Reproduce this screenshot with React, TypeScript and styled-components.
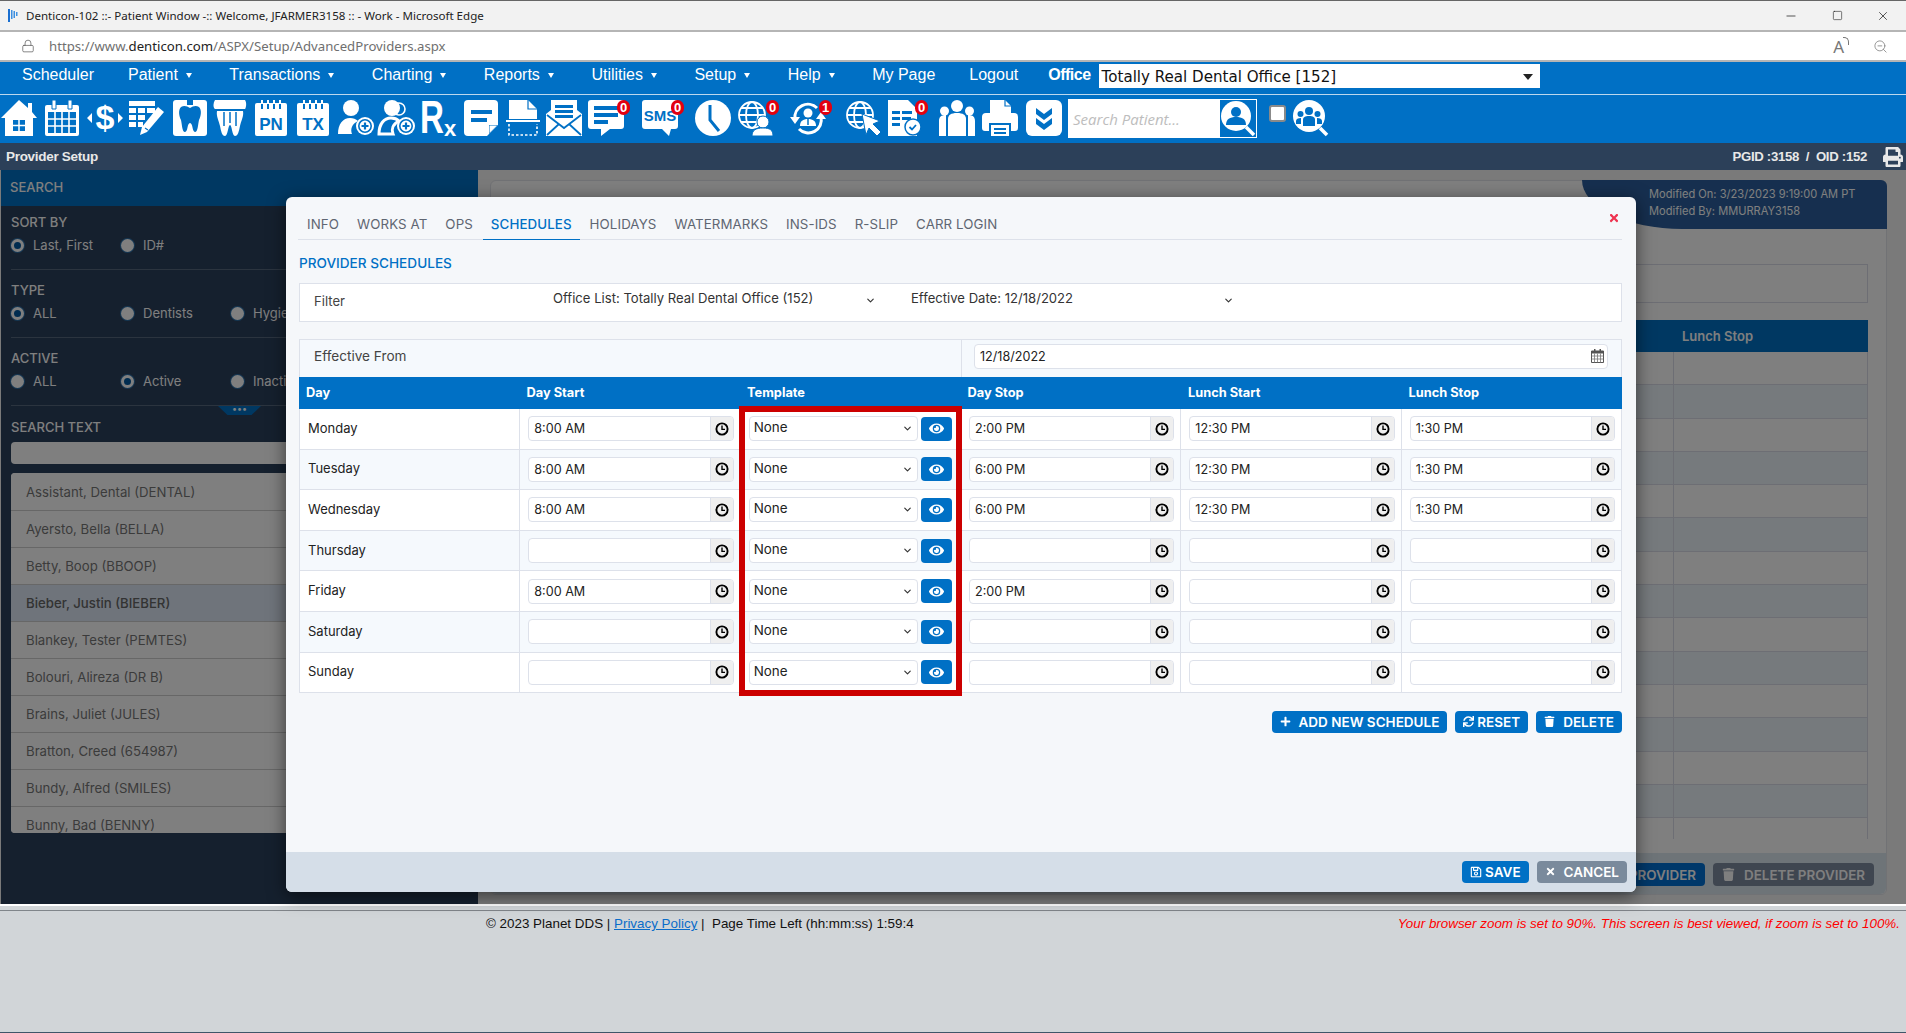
import React from 'react';
import styled, { createGlobalStyle } from 'styled-components';
import { ChevronDown, Lock, ZoomOut, Minus, Square, X } from 'lucide-react';
import { FaEye, FaPlus, FaPrint, FaRegSave, FaSync, FaTimes, FaTrash } from 'react-icons/fa';

const BLUE = '#0070c5';
const LINE = '#dde1ea';
const UI_FONT = '"Inter", "Open Sans", sans-serif';
const ARIAL = '"Liberation Sans", Arial, sans-serif';

const GlobalStyle = createGlobalStyle`
    html, body { margin: 0; padding: 0; background: #d1d5d8; }
    * { box-sizing: border-box; }
`;

const Page = styled.div`
    width: 1906px;
    height: 1033px;
    display: flex;
    flex-direction: column;
    overflow: hidden;
    font-family: ${UI_FONT};
`;

const TitleBar = styled.div`
    height: 32px;
    flex: none;
    display: flex;
    align-items: center;
    background: #f2f2f2;
    border-top: 1px solid #666;
    border-bottom: 2px solid #b5b5b5;
    padding-left: 8px;
    font: 11.55px "Noto Sans", sans-serif;
    color: #222;
`;

const TitleText = styled.span`
    margin-left: 8px;
    flex: 1;
`;

const WindowButton = styled.span`
    width: 46px;
    display: flex;
    justify-content: center;
    color: #111;
`;

const AddressBar = styled.div`
    height: 30px;
    flex: none;
    display: flex;
    align-items: center;
    background: #fff;
    border-bottom: 2px solid #b5b5b5;
    padding: 0 18px 0 21px;
    font: 13.2px "Noto Sans", sans-serif;
    color: #6f6f6f;
`;

const Url = styled.span`
    margin-left: 14px;
    flex: 1;
    b { font-weight: 400; color: #222; }
`;

const AddressTool = styled.span`
    margin-left: 29px;
    display: flex;
    color: #777;
`;

const ReadAloud = styled.span`
    font: 17px "Noto Sans", sans-serif;
    color: #777;
    position: relative;
    &::after {
        content: '';
        position: absolute;
        top: 2px;
        right: -5px;
        width: 5px;
        height: 7px;
        border-top: 1px solid #777;
        border-right: 1px solid #777;
        border-radius: 0 5px 0 0;
    }
`;

const MenuBar = styled.nav`
    height: 33px;
    flex: none;
    display: flex;
    align-items: flex-start;
    gap: 34px;
    background: ${BLUE};
    padding: 0 0 0 22px;
    border-bottom: 1px solid #bcd8ee;
`;

const MenuItem = styled.span`
    height: 25px;
    display: flex;
    align-items: center;
    color: #fff;
    font: 16px ${ARIAL};
`;

const Caret = styled.i`
    margin: 1px 3.5px 0 8px;
    border-left: 3.5px solid transparent;
    border-right: 3.5px solid transparent;
    border-top: 5px solid #fff;
`;

const OfficeLabel = styled.b`
    margin-left: -4px;
    height: 25px;
    display: flex;
    align-items: center;
    color: #fff;
    letter-spacing: -0.5px;
    font: bold 16px ${ARIAL};
`;

const OfficeSelect = styled.div`
    width: 441px;
    height: 24px;
    margin: 2px 0 0 -26px;
    padding: 1px 6px 0 3px;
    background: #fff;
    display: flex;
    align-items: center;
    justify-content: space-between;
    font: 15.1px "DejaVu Sans", sans-serif;
    color: #111;
`;

const SelectCaret = styled.i`
    border-left: 5.5px solid transparent;
    border-right: 5.5px solid transparent;
    border-top: 6px solid #222;
    margin-right: 1px;
`;

const IconBar = styled.div`
    height: 48px;
    flex: none;
    display: flex;
    align-items: flex-start;
    background: ${BLUE};
    padding: 5px 0 0 1px;
`;

const IconSlot = styled.span<{ $w: number }>`
    position: relative;
    flex: none;
    width: ${p => p.$w}px;
    height: 36px;
    svg { display: block; width: 36px; height: 36px; overflow: visible; }
`;

const Badge = styled.b`
    position: absolute;
    top: 0;
    left: 29px;
    width: 13px;
    height: 15px;
    border-radius: 7px;
    background: #e3000f;
    color: #fff;
    font: bold 13px/15px ${ARIAL};
    text-align: center;
`;

const SearchBox = styled.div`
    flex: none;
    width: 189px;
    height: 39px;
    margin-top: -1px;
    background: #fff;
    display: flex;
    align-items: center;
    justify-content: space-between;
    padding: 1px 1px 1px 5px;
    font: italic 15px "Open Sans", sans-serif;
    color: #bdbdbd;
`;

const SearchIcon = styled.span`
    width: 36px;
    height: 37px;
    background: ${BLUE};
    svg { display: block; }
`;

const SmallCheck = styled.span`
    flex: none;
    width: 17px;
    height: 17px;
    margin: 5px 7px 0 12px;
    background: #fff;
    border: 2px solid #8a8a8a;
    border-radius: 3px;
`;

const PageHead = styled.header`
    height: 27px;
    flex: none;
    display: flex;
    align-items: center;
    justify-content: space-between;
    background: #2c4059;
    padding: 0 3px 0 6px;
    color: #e8e8e8;
    font: bold 13.5px ${ARIAL};
    letter-spacing: -0.3px;
`;

const HeadRight = styled.span`
    display: flex;
    align-items: center;
    gap: 16px;
    font-size: 13.2px;
    svg { display: block; }
`;

const Main = styled.main`
    position: relative;
    height: 734px;
    flex: none;
    display: flex;
    background: #f4f4f4;
    padding-left: 1px;
`;

const Sidebar = styled.aside`
    position: relative;
    width: 477px;
    flex: none;
    background: #2a405c;
    color: #fff;
    font-size: 13px;
`;

const SideHead = styled.div`
    height: 36px;
    display: flex;
    align-items: center;
    padding: 0 0 2px 9px;
    background: ${BLUE};
    font-weight: 500;
    font-size: 13px;
`;

const SideBody = styled.div`
    padding: 0 10px;
`;

const SideSection = styled.section`
    padding: 8px 0 16px;
    border-bottom: 1px solid #56687f;
    & + & { padding-top: 12px; }
`;

const SideLabel = styled.div`
    height: 16px;
    line-height: 16px;
    font-weight: 500;
`;

const RadioRow = styled.div`
    display: flex;
    margin-top: 7px;
`;

const RadioOption = styled.label`
    width: 110px;
    height: 16px;
    display: flex;
    align-items: center;
    gap: 9px;
`;

const Radio = styled.i<{ $on?: boolean }>`
    width: 13px;
    height: 13px;
    flex: none;
    border-radius: 50%;
    background: ${p => (p.$on ? '#0058a0' : '#fff')};
    border: ${p => (p.$on ? '3px solid #fff' : 'none')};
    box-shadow: 0 0 0 1px #2b6fa8;
`;

const Grip = styled.div`
    position: absolute;
    left: 217px;
    top: 236px;
    width: 43px;
    height: 9px;
    background: #0070c5;
    clip-path: polygon(0 0, 100% 0, 78% 100%, 22% 100%);
    color: #fff;
    font-size: 9px;
    line-height: 5px;
    text-align: center;
`;

const SearchLabel = styled(SideLabel)`
    margin-top: 13px;
`;

const SideInput = styled.div`
    height: 22px;
    margin-top: 7px;
    background: #fff;
    border-radius: 4px;
`;

const ProviderList = styled.ul`
    list-style: none;
    margin: 9px 0 0;
    padding: 0;
    height: 360px;
    overflow: hidden;
    background: #fff;
    border-radius: 4px;
    color: #777;
`;

const ProviderItem = styled.li<{ $on?: boolean }>`
    height: 37px;
    display: flex;
    align-items: center;
    padding-left: 15px;
    border-bottom: 1px solid #cfcfcf;
    background: ${p => (p.$on ? '#dee9f6' : '#fff')};
    color: ${p => (p.$on ? '#666' : '#777')};
    font-weight: ${p => (p.$on ? 500 : 400)};
    font-size: 13.2px;
    white-space: nowrap;
    &:first-child { height: 38px; }
`;

const Panel = styled.section`
    position: relative;
    width: 1397px;
    height: 715px;
    margin: 10px 0 0 12px;
    display: flex;
    flex-direction: column;
    background: #fff;
    border-radius: 6px;
    border: 1px solid #e2e4ea;
    color: #fff;
`;

const ModifiedTag = styled.div`
    position: absolute;
    top: -1px;
    right: -1px;
    width: 305px;
    height: 49px;
    padding: 6px 0 0 67px;
    background: #2c5f9e;
    border-radius: 0 6px 0 100px / 0 6px 0 49px;
    font-size: 11.1px;
    line-height: 17px;
    color: #fff;
`;

const PanelBody = styled.div`
    flex: 1;
    overflow: hidden;
    padding: 83px 18px 0 0;
`;

const PanelBox = styled.div`
    height: 39px;
    border: 1px solid #dadde8;
`;

const PanelTable = styled.div`
    margin-top: 17px;
    height: 519px;
    overflow: hidden;
`;

const PanelHeadRow = styled.div`
    height: 32px;
    display: flex;
    justify-content: flex-end;
    align-items: center;
    background: ${BLUE};
    font-weight: 600;
    font-size: 13px;
`;

const PanelHeadCell = styled.span`
    width: 194px;
    padding-left: 8px;
`;

const PanelRow = styled.div<{ $alt: boolean }>`
    height: 33.3px;
    display: flex;
    justify-content: flex-end;
    background: ${p => (p.$alt ? '#edf5fb' : '#fff')};
    border-bottom: 1px solid #dadde8;
    border-right: 1px solid #dadde8;
`;

const PanelCell = styled.span`
    width: 194px;
    border-left: 1px solid #dadde8;
`;

const PanelFoot = styled.div`
    height: 41px;
    flex: none;
    display: flex;
    justify-content: flex-end;
    align-items: flex-start;
    gap: 8px;
    padding: 10px 12px 0 0;
    background: #dce8f0;
    border-radius: 0 0 6px 6px;
`;

const PanelButton = styled.span<{ $muted?: boolean }>`
    height: 23px;
    display: flex;
    align-items: center;
    gap: 9px;
    padding: 0 9px;
    border-radius: 4px;
    background: ${p => (p.$muted ? '#7f8ca0' : '#0070d4')};
    color: #fff;
    font-size: 13.4px;
    font-weight: 600;
`;

const Overlay = styled.div`
    position: absolute;
    inset: 0;
    background: rgba(0, 0, 0, 0.5);
`;

const Modal = styled.div`
    position: absolute;
    left: 286px;
    top: 27px;
    width: 1350px;
    height: 695px;
    display: flex;
    flex-direction: column;
    background: #f5f7fa;
    border-radius: 6px;
    box-shadow: 0 4px 18px rgba(0, 0, 0, 0.55);
    overflow: hidden;
`;

const ModalBody = styled.div`
    position: relative;
    flex: 1;
    padding: 0 14px 0 13px;
`;

const Tabs = styled.div`
    height: 43px;
    display: flex;
    align-items: flex-end;
    gap: 2px;
    margin-left: -1px;
    padding-left: 1px;
    border-bottom: 1px solid ${LINE};
`;

const Tab = styled.span<{ $on?: boolean }>`
    height: 30px;
    display: flex;
    align-items: center;
    padding: 0 8px 1px;
    margin-bottom: -1px;
    border-bottom: 1px solid ${p => (p.$on ? BLUE : 'transparent')};
    color: ${p => (p.$on ? BLUE : '#5f6672')};
    font-size: 13.3px;
    letter-spacing: 0.1px;
    font-weight: ${p => (p.$on ? 500 : 400)};
    white-space: nowrap;
`;

const CloseButton = styled.span`
    position: absolute;
    top: 15px;
    right: 16px;
    color: #ee3350;
    display: flex;
`;

const SectionTitle = styled.h2`
    margin: 15px 0 12px;
    height: 16px;
    font-size: 13.6px;
    line-height: 16px;
    font-weight: 500;
    color: ${BLUE};
`;

const FilterRow = styled.div`
    height: 39px;
    display: grid;
    grid-template-columns: 253px 358px 1fr;
    align-items: center;
    background: #fff;
    border: 1px solid ${LINE};
    font-size: 13.1px;
    color: #333;
`;

const FilterLabel = styled.span`
    padding: 0 0 3px 14px;
    color: #444;
`;

const FilterSelect = styled.span`
    width: 323px;
    display: flex;
    align-items: center;
    justify-content: space-between;
    margin-top: -9px;
    svg { margin-top: 4px; }
`;

const EffectiveRow = styled.div`
    height: 38px;
    margin-top: 17px;
    display: grid;
    grid-template-columns: 662px 1fr;
    background: #f5f9fd;
    border: 1px solid ${LINE};
    border-bottom: none;
    font-size: 13.6px;
    color: #444;
`;

const EffectiveLabel = styled.span`
    display: flex;
    align-items: center;
    padding: 0 0 5px 14px;
    border-right: 1px solid ${LINE};
`;

const DateCell = styled.span`
    display: flex;
    align-items: flex-start;
    padding: 4px 13px 0 12px;
`;

const DateInput = styled.span`
    flex: 1;
    height: 25px;
    display: flex;
    align-items: center;
    justify-content: space-between;
    padding: 0 3px 1px 5px;
    background: #fff;
    border: 1px solid ${LINE};
    border-radius: 4px;
    color: #222;
    font-size: 12.6px;
`;

const ScheduleGrid = styled.div`
    position: relative;
`;

const ScheduleHead = styled.div`
    height: 32px;
    display: grid;
    grid-template-columns: repeat(6, 1fr);
    align-items: center;
    background: ${BLUE};
    color: #fff;
    font-size: 12.8px;
    font-weight: 700;
    padding-bottom: 2px;
`;

const HeadCell = styled.span`
    padding-left: 7px;
`;

const ScheduleRow = styled.div<{ $alt: boolean }>`
    height: 40.6px;
    display: grid;
    grid-template-columns: repeat(6, 1fr);
    background: ${p => (p.$alt ? '#f5f9fd' : '#fff')};
    border-left: 1px solid ${LINE};
    border-bottom: 1px solid ${LINE};
`;

const Cell = styled.div`
    display: flex;
    align-items: center;
    gap: 3px;
    padding: 0 6px 0 8px;
    border-right: 1px solid ${LINE};
    min-width: 0;
`;

const DayCell = styled(Cell)`
    color: #222;
    font-size: 13px;
    padding-bottom: 2px;
`;

const TemplateCell = styled(Cell)`
    padding-right: 8px;
`;

const TimeField = styled.div`
    flex: 1;
    height: 25px;
    display: flex;
    background: #fff;
    border: 1px solid ${LINE};
    border-radius: 4px;
    overflow: hidden;
`;

const TimeValue = styled.span`
    flex: 1;
    display: flex;
    align-items: center;
    padding-left: 5px;
    color: #222;
    font-size: 12.6px;
`;

const TimeAddon = styled.span`
    width: 23px;
    flex: none;
    display: flex;
    align-items: center;
    justify-content: center;
    background: #efefef;
    border-left: 1px solid ${LINE};
    svg { display: block; }
`;

const TemplateSelect = styled.div`
    flex: 1;
    height: 25px;
    display: flex;
    align-items: center;
    justify-content: space-between;
    padding: 0 4px 0 4px;
    background: #fff;
    border: 1px solid ${LINE};
    border-radius: 4px;
    color: #222;
    font-size: 13.4px;
    span { margin-top: -3px; }
`;

const EyeButton = styled.span`
    width: 31px;
    height: 24px;
    flex: none;
    display: flex;
    align-items: center;
    justify-content: center;
    background: ${BLUE};
    border-radius: 4px;
    color: #fff;
`;

const Highlight = styled.div`
    position: absolute;
    left: 440px;
    top: 29px;
    width: 223px;
    height: 290px;
    border: 6px solid #cc0000;
    pointer-events: none;
`;

const ActionRow = styled.div`
    margin-top: 18px;
    display: flex;
    justify-content: flex-end;
    gap: 8px;
`;

const ActionButton = styled.span<{ $muted?: boolean }>`
    height: 22px;
    display: flex;
    align-items: center;
    gap: 8px;
    padding: 0 8px 1px;
    border-radius: 4px;
    background: ${p => (p.$muted ? '#7a8a9c' : BLUE)};
    color: #fff;
    font-size: 13.5px;
    font-weight: 600;
    white-space: nowrap;
`;

const TightButton = styled(ActionButton)`
    gap: 3px;
`;

const ModalFoot = styled.div`
    height: 40px;
    flex: none;
    display: flex;
    justify-content: flex-end;
    gap: 8px;
    padding: 9px 9px 0 0;
    background: #d5dee8;
`;

const SeamLine = styled.div`
    height: 7px;
    flex: none;
    background: #d1d5d8;
    border-top: 2px solid #fff;
    border-bottom: 1px solid #80858a;
`;

const Footer = styled.footer`
    flex: 1;
    display: flex;
    justify-content: space-between;
    padding: 5px 6px 0 486px;
    background: #d1d5d8;
    border-bottom: 1px solid #3f5568;
    font: 13.4px ${ARIAL};
    color: #111;
    a { color: #0a6cc9; text-decoration: underline; }
`;

const ZoomWarning = styled.em`
    color: #f00;
`;

const globe = (
    <g fill="none" stroke="#fff" strokeWidth="1.8">
        <circle cx="15" cy="15" r="13" />
        <ellipse cx="15" cy="15" rx="6" ry="13" />
        <path d="M2 15h26M4 8h22M4 22h22" />
    </g>
);

const plusBadge = (
    <g>
        <circle cx="27" cy="26" r="9" fill="#fff" />
        <circle cx="27" cy="26" r="6.2" fill="none" stroke={BLUE} strokeWidth="1.6" />
        <path d="M27 22.5v7M23.5 26h7" stroke={BLUE} strokeWidth="2.2" />
    </g>
);

const blueText = (t: string, y: number, size: number) => (
    <text x="18" y={y} textAnchor="middle" fontFamily="Liberation Sans" fontWeight="700" fontSize={size} fill={BLUE}>{t}</text>
);

const Svg = ({ children }: { children: React.ReactNode }) => <svg viewBox="0 0 36 36">{children}</svg>;

const ClockIcon = () => (
    <svg width="14" height="14" viewBox="0 0 14 14">
        <circle cx="7" cy="7" r="5.6" fill="none" stroke="#000" strokeWidth="1.9" />
        <path d="M7 3.6V7.4H10" fill="none" stroke="#000" strokeWidth="1.4" />
    </svg>
);

const CalendarIcon = () => (
    <svg width="13" height="14" viewBox="0 0 13 14">
        <path d="M3 0h1.5v3H3zM8.500 0H10v3H8.500z" fill="#555" />
        <path d="M0.500 2h12v11.500H.5z" fill="#fff" stroke="#555" />
        <path d="M.5 2h12v2.500H.5z" fill="#555" />
        <path d="M.5 7h12M.5 10h12M3.500 4.500v9M6.500 4.500v9M9.500 4.500v9" stroke="#777" strokeWidth=".8" />
    </svg>
);

const tools: { w: number; badge?: string; icon: React.ReactNode }[] = [
    { w: 43, icon: <><path d="M18 0 27 8V3h4v9l5 6h-4v18H4V18H0z" fill="#fff" /><path d="M12 20h12v11H12z" fill={BLUE} /><path d="M18 20v11M12 25.500h12" stroke="#fff" strokeWidth="1.5" /></> },
    { w: 43, icon: <><rect x="1" y="5" width="34" height="31" rx="2" fill="#fff" /><path d="M8 0h4v9H8zM24 0h4v9h-4z" fill="#fff" stroke={BLUE} strokeWidth="1" /><path d="M4 12h28v21H4z" fill={BLUE} /><path d="M4 19h28M4 26h28M11 12v21M18 12v21M25 12v21" stroke="#fff" strokeWidth="1.6" /></> },
    { w: 42, icon: <><text x="18" y="29" textAnchor="middle" fontFamily="Liberation Sans" fontWeight="700" fontSize="34" fill="#fff">$</text><path d="M0 18l5-5v10zM36 18l-5-5v10z" fill="#fff" /></> },
    { w: 43, icon: <><path d="M0 1h26v5H0zM0 8h7v5H0zM9 8h7v5H9zM18 8h8v5h-8zM0 15h7v5H0zM9 15h7v5H9zM0 22h7v5H0zM9 22h5v5H9z" fill="#fff" /><path d="M29 7l6 5-17 20-7 3 2-8z" fill="#fff" /><path d="M16 28l3 2" stroke={BLUE} strokeWidth="1.2" /></> },
    { w: 40, icon: <><rect x="1" y="0" width="34" height="36" rx="3" fill="#fff" /><path d="M9 7c3-2 6-1 9 1 3-2 6-3 9-1 3 3 2 9 0 13-1 4-1 12-4 12s-2-9-5-9-2 9-5 9-3-8-4-12c-2-4-3-10 0-13z" fill={BLUE} /><path d="M15 0h6v5h-6z" fill={BLUE} /></> },
    { w: 41, icon: <><path d="M3 0h30c2 3 1 8 0 9H3C1 8 1 3 3 0z" fill="#fff" /><path d="M5 11h26c1 5-2 10-3 15-1 5-2 10-5 10s-3-11-5-11-2 11-5 11-4-5-5-10c-1-5-4-10-3-15z" fill="#fff" /><path d="M12 12v14M18 12v11M24 12v14" stroke={BLUE} strokeWidth="1.5" /></> },
    { w: 42, icon: <><rect x="2" y="3" width="32" height="33" rx="2" fill="#fff" /><path d="M9 0v9M15 0v9M21 0v9M27 0v9" stroke="#fff" strokeWidth="2" /><path d="M9 4v5M15 4v5M21 4v5M27 4v5" stroke={BLUE} strokeWidth="2" />{blueText('PN', 30, 17)}</> },
    { w: 43, icon: <><rect x="2" y="3" width="32" height="33" rx="2" fill="#fff" /><path d="M9 0v9M15 0v9M21 0v9M27 0v9" stroke="#fff" strokeWidth="2" /><path d="M9 4v5M15 4v5M21 4v5M27 4v5" stroke={BLUE} strokeWidth="2" />{blueText('TX', 30, 17)}</> },
    { w: 41, icon: <><circle cx="13" cy="8" r="8" fill="#fff" /><path d="M0 34c0-10 5-16 12-16 3 0 6 1 8 3-6 3-8 8-6 13z" fill="#fff" />{plusBadge}</> },
    { w: 41, icon: <><circle cx="13" cy="8" r="8" fill="#fff" /><circle cx="20" cy="9" r="6" fill="none" stroke="#fff" strokeWidth="1.6" /><path d="M0 34c0-10 5-16 12-16 3 0 6 1 8 3-6 3-8 8-6 13z" fill="none" stroke="#fff" strokeWidth="3" />{plusBadge}</> },
    { w: 43, icon: <><text transform="scale(.72 1)" x="0" y="33" fontFamily="Liberation Sans" fontWeight="700" fontSize="46" fill="#fff">R</text><text x="24" y="36" fontFamily="Liberation Sans" fontWeight="700" fontSize="22" fill="#fff">x</text></> },
    { w: 42, icon: <><path d="M5 0h26a4 4 0 0 1 4 4v21L24 36H5a4 4 0 0 1-4-4V4a4 4 0 0 1 4-4z" fill="#fff" /><path d="M8 10h21v4H8zM8 18h16v4H8z" fill={BLUE} /><path d="M26 34l9-9h-9z" fill={BLUE} /><path d="M26.500 33v-7.500H34" fill="#fff" /></> },
    { w: 41, icon: <><path d="M4 0h19l9 9v10H4z" fill="#fff" /><path d="M23 0v9h9" fill="none" stroke={BLUE} strokeWidth="1.2" /><path d="M1 21h34" stroke="#fff" strokeWidth="2" /><path d="M4 24v11h28V24" fill="none" stroke="#fff" strokeWidth="1.6" strokeDasharray="2.5 2" /></> },
    { w: 42, icon: <><path d="M0 14l5-4V0h26v10l5 4v22H0z" fill="#fff" /><path d="M9 5h18v3H9zM9 10h18v3H9zM9 15h18v3H9z" fill={BLUE} /><path d="M1 15l17 13 17-13M1 35l12-11M35 35L23 24" fill="none" stroke={BLUE} strokeWidth="1.8" /></> },
    { w: 54, badge: '0', icon: <><path d="M3 0h30a3 3 0 0 1 3 3v23a3 3 0 0 1-3 3H22l-9 7v-7H3a3 3 0 0 1-3-3V3a3 3 0 0 1 3-3z" fill="#fff" /><path d="M6 6h24v4H6zM6 13h24v4H6zM6 20h14v4H6z" fill={BLUE} /></> },
    { w: 53, badge: '0', icon: <><path d="M3 0h30a3 3 0 0 1 3 3v23a3 3 0 0 1-3 3H29l-2 7-7-7H3a3 3 0 0 1-3-3V3a3 3 0 0 1 3-3z" fill="#fff" />{blueText('SMS', 21, 15)}</> },
    { w: 42, icon: <><circle cx="18" cy="18" r="18" fill="#fff" /><path d="M15 5v15l9 11" fill="none" stroke={BLUE} strokeWidth="3" /></> },
    { w: 53, badge: '0', icon: <>{globe}<circle cx="26" cy="22" r="6" fill="#fff" stroke={BLUE} strokeWidth="1" /><path d="M15 36c0-6 4-8 11-8s10 2 10 8z" fill="#fff" stroke={BLUE} strokeWidth="1" /></> },
    { w: 55, badge: '1', icon: <><path d="M5 19a13 13 0 0 1 22-11M31 17a13 13 0 0 1-22 12" fill="none" stroke="#fff" strokeWidth="3" /><path d="M0 17h10l-5 7zM36 19H26l5-7z" fill="#fff" /><circle cx="18" cy="13" r="4.500" fill="#fff" /><path d="M10 26c0-5 3-7 8-7s8 2 8 7z" fill="#fff" /><path d="M18 19v6" stroke={BLUE} strokeWidth="1.5" /></> },
    { w: 41, icon: <>{globe}<path d="M17 14l18 7-7 3 8 8-4 4-8-8-3 7z" fill="#fff" stroke={BLUE} strokeWidth="1" /></> },
    { w: 53, badge: '0', icon: <><path d="M2 0h20l9 9v27H2z" fill="#fff" /><path d="M6 11h8v3H6zM16 11h10v3H16zM6 17h8v3H6zM16 17h9v3h-9zM6 23h8v3H6z" fill={BLUE} /><circle cx="27" cy="27" r="8" fill="#fff" stroke={BLUE} strokeWidth="1.5" /><path d="M23.500 27l2.500 2.500 4-4.500" fill="none" stroke={BLUE} strokeWidth="1.8" /></> },
    { w: 43, icon: <><circle cx="18" cy="6" r="6" fill="#fff" /><circle cx="5.500" cy="11" r="4.500" fill="#fff" /><circle cx="30.500" cy="11" r="4.500" fill="#fff" /><path d="M9 36V19c0-4 3-6 9-6s9 2 9 6v17z" fill="#fff" /><path d="M0 36V21c0-4 2-6 7-6v21zM36 36V21c0-4-2-6-7-6v21z" fill="#fff" /></> },
    { w: 44, icon: <><path d="M8 0h15l6 6v8H8z" fill="#fff" /><path d="M23 0v6h6" fill="none" stroke={BLUE} strokeWidth="1.2" /><path d="M4 13h28a4 4 0 0 1 4 4v11a3 3 0 0 1-3 3h-4v-8H7v8H3a3 3 0 0 1-3-3V17a4 4 0 0 1 4-4z" fill="#fff" /><path d="M9 25h18v11H9z" fill="#fff" /><path d="M12 28h12v2H12zM12 32h12v2H12z" fill={BLUE} /></> },
    { w: 42, icon: <><rect x="0" y="0" width="36" height="36" rx="6" fill="#fff" /><path d="M10 8l8 6 8-6v6l-8 6-8-6zM10 18l8 6 8-6v6l-8 6-8-6z" fill={BLUE} /></> },
];

const times = [
    ['Monday', '8:00 AM', '2:00 PM', '12:30 PM', '1:30 PM'],
    ['Tuesday', '8:00 AM', '6:00 PM', '12:30 PM', '1:30 PM'],
    ['Wednesday', '8:00 AM', '6:00 PM', '12:30 PM', '1:30 PM'],
    ['Thursday', '', '', '', ''],
    ['Friday', '8:00 AM', '2:00 PM', '', ''],
    ['Saturday', '', '', '', ''],
    ['Sunday', '', '', '', ''],
];

const providers = [
    'Assistant, Dental (DENTAL)', 'Ayersto, Bella (BELLA)', 'Betty, Boop (BBOOP)', 'Bieber, Justin (BIEBER)',
    'Blankey, Tester (PEMTES)', 'Bolouri, Alireza (DR B)', 'Brains, Juliet (JULES)', 'Bratton, Creed (654987)',
    'Bundy, Alfred (SMILES)', 'Bunny, Bad (BENNY)',
];

const menu = ['Patient', 'Transactions', 'Charting', 'Reports', 'Utilities', 'Setup', 'Help'];
const tabs = ['INFO', 'WORKS AT', 'OPS', 'SCHEDULES', 'HOLIDAYS', 'WATERMARKS', 'INS-IDS', 'R-SLIP', 'CARR LOGIN'];
const columns = ['Day', 'Day Start', 'Template', 'Day Stop', 'Lunch Start', 'Lunch Stop'];

function Time({ value }: { value: string }) {
    return (
        <Cell>
            <TimeField>
                <TimeValue>{value}</TimeValue>
                <TimeAddon><ClockIcon /></TimeAddon>
            </TimeField>
        </Cell>
    );
}

function RadioGroup({ options, selected }: { options: string[]; selected: number }) {
    return (
        <RadioRow>
            {options.map((o, i) => (
                <RadioOption key={o}>
                    <Radio $on={i === selected} />
                    {o}
                </RadioOption>
            ))}
        </RadioRow>
    );
}

export default function App() {
    return (
        <Page>
            <GlobalStyle />
            <TitleBar>
                <svg width="10" height="13" viewBox="0 0 10 13">
                    <path d="M0 0h2v13H0z" fill="#1a6fd0" />
                    <path d="M3 1h1.500v9H3zM5.500 2H7v7H5.500zM8 3h1.500v4H8z" fill="#3c8fe0" />
                </svg>
                <TitleText>Denticon-102 ::- Patient Window -:: Welcome, JFARMER3158 :: - Work - Microsoft Edge</TitleText>
                <WindowButton><Minus size={14} strokeWidth={1.2} /></WindowButton>
                <WindowButton><Square size={11} strokeWidth={1.2} /></WindowButton>
                <WindowButton><X size={14} strokeWidth={1.2} /></WindowButton>
            </TitleBar>
            <AddressBar>
                <Lock size={14} strokeWidth={1.2} color="#555" />
                <Url>https://www.<b>denticon.com</b>/ASPX/Setup/AdvancedProviders.aspx</Url>
                <AddressTool><ReadAloud>A</ReadAloud></AddressTool>
                <AddressTool><ZoomOut size={15} strokeWidth={1.2} /></AddressTool>
            </AddressBar>
            <MenuBar>
                <MenuItem>Scheduler</MenuItem>
                {menu.map(m => <MenuItem key={m}>{m}<Caret /></MenuItem>)}
                <MenuItem>My Page</MenuItem>
                <MenuItem>Logout</MenuItem>
                <OfficeLabel>Office</OfficeLabel>
                <OfficeSelect>Totally Real Dental Office [152]<SelectCaret /></OfficeSelect>
            </MenuBar>
            <IconBar>
                {tools.map((t, i) => (
                    <IconSlot key={i} $w={t.w}>
                        <Svg>{t.icon}</Svg>
                        {t.badge && <Badge>{t.badge}</Badge>}
                    </IconSlot>
                ))}
                <SearchBox>
                    Search Patient...
                    <SearchIcon>
                        <svg width="36" height="37" viewBox="0 0 36 37">
                            <circle cx="16" cy="16" r="15" fill="#fff" />
                            <circle cx="16" cy="12" r="5" fill={BLUE} />
                            <path d="M6 25c0-6 4-8 10-8s10 2 10 8z" fill={BLUE} />
                            <path d="M26 27l8 8" stroke="#fff" strokeWidth="3.5" />
                        </svg>
                    </SearchIcon>
                </SearchBox>
                <SmallCheck />
                <IconSlot $w={36}>
                    <Svg>
                        <circle cx="16" cy="16" r="16" fill="#fff" />
                        <circle cx="16" cy="11" r="4" fill={BLUE} />
                        <circle cx="7.500" cy="14" r="3" fill={BLUE} />
                        <circle cx="24.500" cy="14" r="3" fill={BLUE} />
                        <path d="M10 26v-6c0-3 2-4 6-4s6 1 6 4v6z" fill={BLUE} />
                        <path d="M3 24v-3c0-2 2-3 5-3v6zM29 24v-3c0-2-2-3-5-3v6z" fill={BLUE} />
                        <path d="M27 28l7 7" stroke="#fff" strokeWidth="3.5" />
                    </Svg>
                </IconSlot>
            </IconBar>
            <PageHead>
                Provider Setup
                <HeadRight>PGID :3158 &nbsp;/&nbsp; OID :152<FaPrint size={20} /></HeadRight>
            </PageHead>
            <Main>
                <Sidebar>
                    <SideHead>SEARCH</SideHead>
                    <SideBody>
                        <SideSection>
                            <SideLabel>SORT BY</SideLabel>
                            <RadioGroup options={['Last, First', 'ID#']} selected={0} />
                        </SideSection>
                        <SideSection>
                            <SideLabel>TYPE</SideLabel>
                            <RadioGroup options={['ALL', 'Dentists', 'Hygienists']} selected={0} />
                        </SideSection>
                        <SideSection>
                            <SideLabel>ACTIVE</SideLabel>
                            <RadioGroup options={['ALL', 'Active', 'Inactive']} selected={1} />
                        </SideSection>
                        <SearchLabel>SEARCH TEXT</SearchLabel>
                        <SideInput />
                        <ProviderList>
                            {providers.map(p => <ProviderItem key={p} $on={p.startsWith('Bieber')}>{p}</ProviderItem>)}
                        </ProviderList>
                    </SideBody>
                    <Grip>•••</Grip>
                </Sidebar>
                <Panel>
                    <ModifiedTag>
                        Modified On: 3/23/2023 9:19:00 AM PT<br />
                        Modified By: MMURRAY3158
                    </ModifiedTag>
                    <PanelBody>
                        <PanelBox />
                        <PanelTable>
                            <PanelHeadRow><PanelHeadCell>Lunch Stop</PanelHeadCell></PanelHeadRow>
                            {Array.from({ length: 15 }, (_, i) => (
                                <PanelRow key={i} $alt={i % 2 === 1}><PanelCell /></PanelRow>
                            ))}
                        </PanelTable>
                    </PanelBody>
                    <PanelFoot>
                        <PanelButton>SAVE PROVIDER</PanelButton>
                        <PanelButton $muted><FaTrash size={13} />DELETE PROVIDER</PanelButton>
                    </PanelFoot>
                </Panel>
                <Overlay />
                <Modal>
                    <ModalBody>
                        <Tabs>
                            {tabs.map(t => <Tab key={t} $on={t === 'SCHEDULES'}>{t}</Tab>)}
                        </Tabs>
                        <CloseButton><FaTimes size={12} /></CloseButton>
                        <SectionTitle>PROVIDER SCHEDULES</SectionTitle>
                        <FilterRow>
                            <FilterLabel>Filter</FilterLabel>
                            <FilterSelect>Office List: Totally Real Dental Office (152)<ChevronDown size={11} strokeWidth={2.5} /></FilterSelect>
                            <FilterSelect>Effective Date: 12/18/2022<ChevronDown size={11} strokeWidth={2.5} /></FilterSelect>
                        </FilterRow>
                        <EffectiveRow>
                            <EffectiveLabel>Effective From</EffectiveLabel>
                            <DateCell>
                                <DateInput>12/18/2022<CalendarIcon /></DateInput>
                            </DateCell>
                        </EffectiveRow>
                        <ScheduleGrid>
                            <ScheduleHead>
                                {columns.map(c => <HeadCell key={c}>{c}</HeadCell>)}
                            </ScheduleHead>
                            {times.map(([day, start, stop, lunchStart, lunchStop], i) => (
                                <ScheduleRow key={day} $alt={i % 2 === 1}>
                                    <DayCell>{day}</DayCell>
                                    <Time value={start} />
                                    <TemplateCell>
                                        <TemplateSelect><span>None</span><ChevronDown size={11} strokeWidth={2.5} color="#333" /></TemplateSelect>
                                        <EyeButton><FaEye size={15} /></EyeButton>
                                    </TemplateCell>
                                    <Time value={stop} />
                                    <Time value={lunchStart} />
                                    <Time value={lunchStop} />
                                </ScheduleRow>
                            ))}
                            <Highlight />
                        </ScheduleGrid>
                        <ActionRow>
                            <ActionButton><FaPlus size={11} />ADD NEW SCHEDULE</ActionButton>
                            <TightButton><FaSync size={11} />RESET</TightButton>
                            <ActionButton><FaTrash size={11} />DELETE</ActionButton>
                        </ActionRow>
                    </ModalBody>
                    <ModalFoot>
                        <TightButton><FaRegSave size={12} />SAVE</TightButton>
                        <ActionButton $muted><FaTimes size={11} />CANCEL</ActionButton>
                    </ModalFoot>
                </Modal>
            </Main>
            <SeamLine />
            <Footer>
                <span>© 2023 Planet DDS | <a href="#privacy">Privacy Policy</a> | &nbsp;Page Time Left (hh:mm:ss) 1:59:4</span>
                <ZoomWarning>Your browser zoom is set to 90%. This screen is best viewed, if zoom is set to 100%.</ZoomWarning>
            </Footer>
        </Page>
    );
}
